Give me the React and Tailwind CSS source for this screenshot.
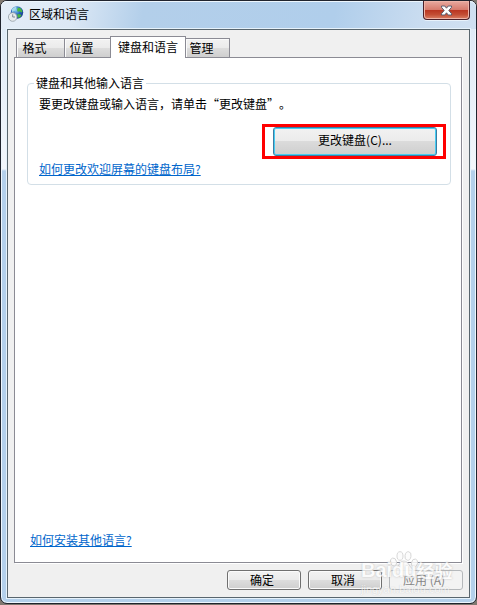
import React, { useState } from "react";

const tabs = [
  { id: "format", label: "格式", width: "w-[49px]" },
  { id: "place", label: "位置", width: "w-[47px]" },
  { id: "keyboard", label: "键盘和语言", width: "w-[76px]" },
  { id: "manage", label: "管理", width: "w-[45px]" },
];

function GlobeIcon() {
  return (
    <svg width="16" height="16" viewBox="0 0 16 16" aria-hidden="true">
      <defs>
        <radialGradient id="sea" cx="0.4" cy="0.3" r="0.75">
          <stop offset="0" stopColor="#8fd0f5" />
          <stop offset="0.5" stopColor="#2869bd" />
          <stop offset="1" stopColor="#102f80" />
        </radialGradient>
      </defs>
      <circle cx="9" cy="6.5" r="6.2" fill="url(#sea)" />
      <path d="M4 3c1-1.500 3-2.500 4.500-2.300L8 3 6.500 5 4 6z" fill="#a5d9e8" />
      <path d="M10 1.500l3 1 1.500 3-1 1-2-1.500-1.500 1L9 4zM9.500 8l3 .5 1 1-2.500 2.500-1.500-1z" fill="#48b83e" />
      <circle cx="4.700" cy="11" r="4.300" fill="#e7ebed" stroke="#9ba6ae" strokeWidth="0.900" />
      <path d="M4.700 8.300V11h2.300" fill="none" stroke="#73808a" strokeWidth="0.900" />
    </svg>
  );
}

function CloseIcon() {
  return (
    <svg width="13" height="11" viewBox="0 0 13 11" aria-hidden="true">
      <path
        d="M1.500 1h3.300L6.500 3.200 8.200 1h3.300v1.300L8.800 5.500l2.700 3.200V10H8.200L6.500 7.800 4.800 10H1.500V8.700l2.700-3.200-2.700-3.200z"
        fill="#fff"
        stroke="#5a5e70"
        strokeWidth="1"
      />
    </svg>
  );
}

function PushButton({ children, disabled }) {
  const look = disabled
    ? "border-[#b5b8bb] bg-[#f3f3f3] text-[#858585]"
    : "border-[#707070] bg-[linear-gradient(#f2f2f2_0%,#ebebeb_49%,#dddddd_50%,#cfcfcf_100%)] shadow-[inset_0_0_0_1px_#fbfbfb] text-black";
  return (
    <button
      type="button"
      disabled={disabled}
      className={`flex h-5 w-[74px] items-center justify-center rounded-[3px] border leading-4 pr-1 ${look}`}
    >
      {children}
    </button>
  );
}

function Watermark() {
  return (
    <div className="pointer-events-none absolute right-[16px] bottom-0 h-[47px] w-[92px] text-white" aria-hidden="true">
      <svg className="absolute top-0 left-7" width="30" height="28" viewBox="0 0 30 26">
        <g fill="#fcfcfc" fillOpacity="0.850" stroke="#d4d4d4" strokeWidth="0.900">
          <ellipse cx="4.500" cy="11" rx="3" ry="4" transform="rotate(-15 4.500 11)" />
          <ellipse cx="11" cy="5" rx="3" ry="4.300" />
          <ellipse cx="19" cy="5" rx="3" ry="4.300" transform="rotate(10 19 5)" />
          <ellipse cx="25.500" cy="12" rx="3" ry="4" transform="rotate(15 25.500 12)" />
          <path d="M15 10c-4 0-5 5-8 7.500-3 3-1 7.500 3 7.500h10c4 0 6-4.500 3-7.500-3-2.500-4-7.500-8-7.500z" />
        </g>
      </svg>
      <div className="absolute top-2 left-0 flex items-center text-[20px] leading-6 font-bold whitespace-nowrap opacity-75 [text-shadow:0_0_2px_#aaaaaa]">
        <span className="font-['Liberation_Sans',sans-serif]">Baidu</span>
        <span className="text-[18px]">经验</span>
      </div>
      <div className="absolute bottom-[2px] left-0 font-['Liberation_Sans',sans-serif] text-[11px] leading-3 opacity-60 [text-shadow:0_0_1px_#aaaaaa]">
        jingyan.baidu.com
      </div>
    </div>
  );
}

export default function App() {
  const [active, setActive] = useState("keyboard");
  return (
    <div
      lang="zh-CN"
      className="flex h-screen flex-col bg-[#807870] pb-px font-['Noto_Sans_CJK_SC',sans-serif] text-[12px] leading-4 text-black [text-spacing-trim:space-all]"
    >
      <div className="flex min-h-0 flex-1 flex-col rounded-[7px] border border-[#20242e] bg-[linear-gradient(#dbe8f5_0px,#f3f7fc_168px,#b4d0eb_170px,#b4d0eb_100%)] shadow-[inset_0_0_0_1px_#eef6fd]">
        <header className="flex h-[28px] shrink-0 items-start justify-between rounded-t-[6px] bg-[linear-gradient(100deg,#e4edf7_0%,#dce8f5_15%,#b3cfea_30%,#b0ceeb_70%,#c9dcf0_88%,#d0e0f1_100%)] pl-[7px] pr-[6px] shadow-[inset_0_1px_0_#edf6fd]">
          <div className="flex items-center gap-[5px] pt-[5px]">
            <GlobeIcon />
            <h1>区域和语言</h1>
          </div>
          <button
            type="button"
            aria-label="关闭"
            className="flex h-[19px] w-[47px] items-center justify-center rounded-b-[4px] border border-t-0 border-[#4b2029] bg-[linear-gradient(#e8aaa0_0%,#d77b6d_48%,#b93420_50%,#c34d34_75%,#db8066_100%)] shadow-[inset_0_0_0_1px_#eeb4a8,0_1px_0_#e8f2fb]"
          >
            <CloseIcon />
          </button>
        </header>

        <main className="relative mx-[6px] mb-[5px] flex min-h-0 flex-1 flex-col border border-[#59666e] bg-[#f0f0f0] px-[6px] pt-[6px] shadow-[0_0_0_1px_#e6f2fb]">
          <div role="tablist" className="relative z-10 -mb-px flex h-[22px] shrink-0 items-end px-[2px]">
            {tabs.map((tab) => {
              const on = tab.id === active;
              const look = on
                ? "z-10 h-[22px] border-b-0 bg-white pb-[2px]"
                : "h-5 bg-[linear-gradient(#f2f2f2_0%,#ebebeb_49%,#dddddd_50%,#cfcfcf_100%)] shadow-[inset_1px_1px_0_#fbfbfb] pr-3";
              return (
                <button
                  key={tab.id}
                  type="button"
                  role="tab"
                  aria-selected={on}
                  onClick={() => setActive(tab.id)}
                  className={`-mr-px flex items-center justify-center border border-[#8b8b94] ${tab.width} ${look}`}
                >
                  {tab.label}
                </button>
              );
            })}
          </div>

          <section
            role="tabpanel"
            className="mr-[1px] flex min-h-0 flex-1 flex-col items-start border border-[#8b8b94] bg-white px-3 pt-[17px] pb-[14px] shadow-[1px_1px_0_#ffffff]"
          >
            <fieldset className="w-[calc(100%+2px)] rounded-[4px] border border-[#d3dfe7] pr-1 pb-[7px] pl-[11px] pt-0">
              <legend className="-ml-[5px] px-[2px]">键盘和其他输入语言</legend>
              <p className="pt-[5px]">要更改键盘或输入语言，请单击“更改键盘”。</p>
              <div className="mt-3 ml-auto w-[184px] border-[3px] border-[#ff0000] pr-[6px] pl-2">
                <button
                  type="button"
                  className="flex h-[29px] w-full items-center justify-center rounded-[3px] border border-[#3b7ca3] bg-[linear-gradient(#f2f2f2_0%,#ebebeb_49%,#dbdbdb_50%,#cecece_100%)] pb-[3px] shadow-[inset_0_0_0_1px_#46cdf2]"
                >
                  更改键盘(C)...
                </button>
              </div>
              <a href="#layout" className="mt-[2px] inline-block text-[#0066cc] underline">
                如何更改欢迎屏幕的键盘布局?
              </a>
            </fieldset>
            <a href="#install" className="mt-auto ml-[3px] text-[#0066cc] underline">
              如何安装其他语言?
            </a>
          </section>

          <footer className="flex h-[34px] shrink-0 items-center justify-end gap-[7px]">
            <PushButton>确定</PushButton>
            <PushButton>取消</PushButton>
            <PushButton disabled>应用 (A)</PushButton>
          </footer>
          <Watermark />
        </main>
      </div>
    </div>
  );
}
